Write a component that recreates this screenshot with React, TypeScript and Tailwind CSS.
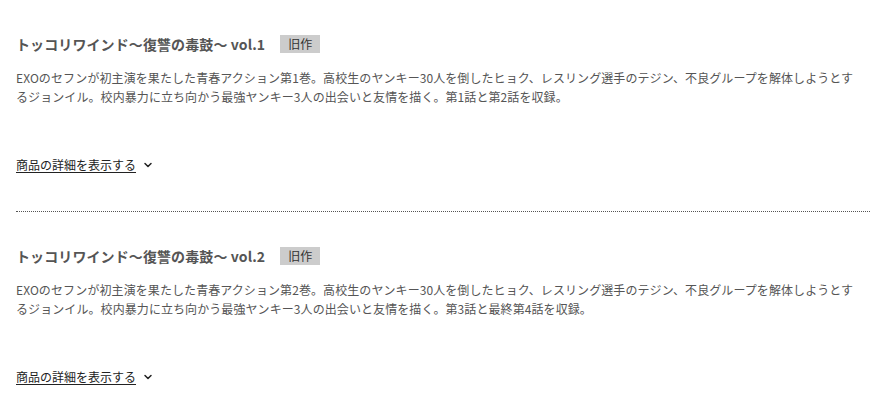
import { ChevronDown } from "lucide-react";

const items = [
  {
    title: "トッコリワインド〜復讐の毒鼓〜 vol.1",
    body: "EXOのセフンが初主演を果たした青春アクション第1巻。高校生のヤンキー30人を倒したヒョク、レスリング選手のテジン、不良グループを解体しようとするジョンイル。校内暴力に立ち向かう最強ヤンキー3人の出会いと友情を描く。第1話と第2話を収録。",
  },
  {
    title: "トッコリワインド〜復讐の毒鼓〜 vol.2",
    body: "EXOのセフンが初主演を果たした青春アクション第2巻。高校生のヤンキー30人を倒したヒョク、レスリング選手のテジン、不良グループを解体しようとするジョンイル。校内暴力に立ち向かう最強ヤンキー3人の出会いと友情を描く。第3話と最終第4話を収録。",
  },
];

export default function App() {
  return (
    <div
      className="min-h-screen bg-white pl-4 pr-px"
      style={{ fontFamily: '"Noto Sans CJK JP", "Noto Sans", sans-serif' }}
    >
      {items.map((item, i) => (
        <div
          key={i}
          className={`pt-[33px] pb-[37px] ${i < items.length - 1 ? "border-b border-dotted border-[#555]" : ""}`}
        >
          {/* Title */}
          <div className="flex items-center gap-[15px] h-[22px]">
            <h2 className="text-[14px] font-bold text-[#555] leading-[22px] tracking-[0.1px]">{item.title}</h2>
            <span className="bg-[#cccccc] text-[#333] text-[12px] leading-[18px] px-[8px]">旧作</span>
          </div>

          {/* Description */}
          <p className="mt-[13px] pr-[12px] text-[12px] leading-[19px] tracking-[0.08px] text-[#555]">{item.body}</p>

          {/* Detail link */}
          <button className="mt-[50px] flex items-center gap-[6px] text-[12px] leading-[18px] text-[#222]">
            <span className="underline underline-offset-2">商品の詳細を表示する</span>
            <ChevronDown size={12} strokeWidth={3} />
          </button>
        </div>
      ))}
    </div>
  );
}
